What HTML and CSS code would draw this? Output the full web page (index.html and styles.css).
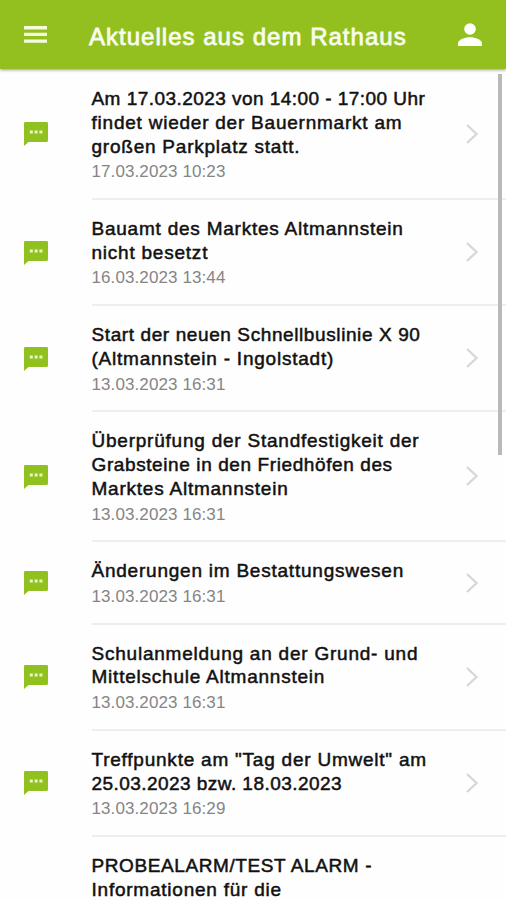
FILE: index.html
```html
<!DOCTYPE html>
<html lang="de">
<head>
  <meta charset="UTF-8">
  <meta name="viewport" content="width=device-width, initial-scale=1.0">
  <title>Aktuelles aus dem Rathaus</title>
  <link rel="stylesheet" href="styles.css">
</head>
<body>

  <svg width="0" height="0" class="symbols">
    <symbol id="chat" viewBox="0 0 24 24">
      <path d="M1.4 0h21.2Q24 0 24 1.4v17.2q0 1.4-1.4 1.4H4.5L0 24V1.4Q0 0 1.4 0z" fill="#91c11e"/>
      <path d="M5.8 8.4h3v3h-3zM10.600 8.4h3v3h-3zM15.4 8.4h3v3h-3z" fill="#e9f4cb"/>
    </symbol>
    <symbol id="chevron" viewBox="0 0 12 20">
      <path d="M1 1l9.5 9L1 19" fill="none" stroke="#d8d8d8" stroke-width="2.4"/>
    </symbol>
  </svg>

  <header>
    <svg class="menu" viewBox="0 0 23 17"><path d="M0 0h23v3.4H0zM0 6.7h23v3.4H0zM0 13.4h23v3.4H0z" fill="#f4fbdf"/></svg>
    <h1>Aktuelles aus dem Rathaus</h1>
    <svg class="user" viewBox="0 0 24 23"><circle cx="12" cy="6" r="5.8" fill="#fff"/><path d="M0 23v-2.6C0 16.600 6.500 14.200 12 14.200s12 2.400 12 6.200V23z" fill="#fff"/></svg>
  </header>

  <div class="list">
    <div class="item">
      <svg class="chat"><use href="#chat"/></svg>
      <div class="content">
        <div class="text">
          <h2><span class="numbers">Am 17.03.2023 von 14:00 - 17:00 Uhr</span><br>findet wieder der Bauernmarkt am<br>großen Parkplatz statt.</h2>
          <p>17.03.2023 10:23</p>
        </div>
        <svg class="chevron"><use href="#chevron"/></svg>
      </div>
    </div>

    <div class="item">
      <svg class="chat"><use href="#chat"/></svg>
      <div class="content">
        <div class="text">
          <h2>Bauamt des Marktes Altmannstein<br>nicht besetzt</h2>
          <p>16.03.2023 13:44</p>
        </div>
        <svg class="chevron"><use href="#chevron"/></svg>
      </div>
    </div>

    <div class="item">
      <svg class="chat"><use href="#chat"/></svg>
      <div class="content">
        <div class="text">
          <h2><span class="tight">Start der neuen Schnellbuslinie X 90</span><br>(Altmannstein - Ingolstadt)</h2>
          <p>13.03.2023 16:31</p>
        </div>
        <svg class="chevron"><use href="#chevron"/></svg>
      </div>
    </div>

    <div class="item">
      <svg class="chat"><use href="#chat"/></svg>
      <div class="content">
        <div class="text">
          <h2>Überprüfung der Standfestigkeit der<br><span class="tight">Grabsteine in den Friedhöfen des</span><br>Marktes Altmannstein</h2>
          <p>13.03.2023 16:31</p>
        </div>
        <svg class="chevron"><use href="#chevron"/></svg>
      </div>
    </div>

    <div class="item">
      <svg class="chat"><use href="#chat"/></svg>
      <div class="content">
        <div class="text">
          <h2>Änderungen im Bestattungswesen</h2>
          <p>13.03.2023 16:31</p>
        </div>
        <svg class="chevron"><use href="#chevron"/></svg>
      </div>
    </div>

    <div class="item">
      <svg class="chat"><use href="#chat"/></svg>
      <div class="content">
        <div class="text">
          <h2>Schulanmeldung an der Grund- und<br>Mittelschule Altmannstein</h2>
          <p>13.03.2023 16:31</p>
        </div>
        <svg class="chevron"><use href="#chevron"/></svg>
      </div>
    </div>

    <div class="item">
      <svg class="chat"><use href="#chat"/></svg>
      <div class="content">
        <div class="text">
          <h2>Treffpunkte am "Tag der Umwelt" am<br><span class="numbers">25.03.2023 bzw. 18.03.2023</span></h2>
          <p>13.03.2023 16:29</p>
        </div>
        <svg class="chevron"><use href="#chevron"/></svg>
      </div>
    </div>

    <div class="item last">
      <div class="content">
        <div class="text">
          <h2><span class="tight">PROBEALARM/TEST ALARM -</span><br>Informationen für die</h2>
        </div>
      </div>
    </div>
  </div>

  <div class="scrollbar"></div>

</body>
</html>
```
FILE: styles.css
```css
* {
  box-sizing: border-box;
}

body {
  margin: 0;
  height: 900px;
  overflow: hidden;
  background-color: #fefefe;
  font-family: "Liberation Sans", Arial, sans-serif;
}

.symbols {
  position: absolute;
}

header {
  display: flex;
  align-items: center;
  height: 69px;
  padding: 3px 24px 0 24px;
  background-color: #93c01f;
  box-shadow: 0 1px 3px rgba(0, 0, 0, 0.4);
}

.menu {
  width: 23px;
  height: 17px;
  margin-top: -3px;
}

.user {
  width: 24px;
  height: 23px;
  margin-left: auto;
  margin-top: -3px;
}

h1 {
  margin: 1px 0 0 42px;
  color: #f8fdec;
  font-size: 24px;
  font-weight: normal;
  letter-spacing: 1.02px;
  white-space: nowrap;
  -webkit-text-stroke: 0.8px #f8fdec;
}

.list {
  padding-top: 1px;
}

.item {
  display: flex;
  align-items: center;
}

.chat {
  flex: none;
  width: 24px;
  height: 24px;
  margin-left: 24px;
  margin-bottom: 1px;
}

.content {
  display: flex;
  flex: 1;
  align-items: center;
  margin-left: 43.500px;
  padding: 17px 28px 14.700px 0;
  border-bottom: 2px solid #eee;
}

.last .content {
  margin-left: 91.500px;
  border-bottom: none;
}

.text {
  flex: 1;
  white-space: nowrap;
}

h2 {
  margin: 0;
  color: #111;
  font-size: 19px;
  font-weight: normal;
  line-height: 23.750px;
  letter-spacing: 0.77px;
  -webkit-text-stroke: 0.5px #111;
}

.tight {
  letter-spacing: 0.6px;
}

.numbers {
  letter-spacing: 0.45px;
}

p {
  margin: 3px 0 0;
  color: #858585;
  font-size: 17px;
  line-height: 22px;
  letter-spacing: 0.1px;
}

.chevron {
  flex: none;
  width: 12px;
  height: 20px;
  margin-bottom: 2px;
}

.scrollbar {
  position: absolute;
  top: 74px;
  right: 4px;
  width: 4px;
  height: 381px;
  background-color: #b9b9b9;
}
```
